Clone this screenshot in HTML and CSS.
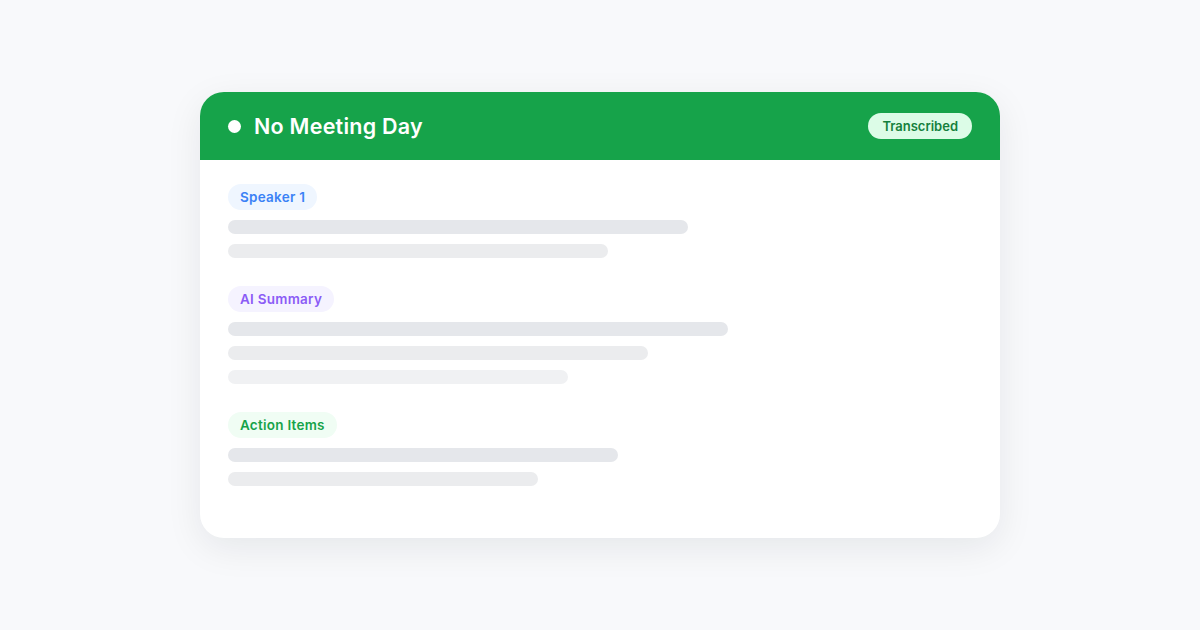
FILE: index.html
```html
<!DOCTYPE html>
<html lang="en">
<head>
    <meta charset="UTF-8">
    <meta name="viewport" content="width=device-width, initial-scale=1.0">
    <title>No Meeting Day</title>
    <link rel="stylesheet" href="styles.css">
</head>
<body>
    <div class="card">
        <div class="head">
            <div class="title"><span class="dot"></span>No Meeting Day</div>
            <span class="status">Transcribed</span>
        </div>
        <div class="body">
            <div class="section">
                <span class="tag blue">Speaker 1</span>
                <div class="lines">
                    <div class="line l1" style="width: 460px"></div>
                    <div class="line l2" style="width: 380px"></div>
                </div>
            </div>
            <div class="section">
                <span class="tag purple">AI Summary</span>
                <div class="lines">
                    <div class="line l1" style="width: 500px"></div>
                    <div class="line l2" style="width: 420px"></div>
                    <div class="line l3" style="width: 340px"></div>
                </div>
            </div>
            <div class="section">
                <span class="tag green">Action Items</span>
                <div class="lines">
                    <div class="line l1" style="width: 390px"></div>
                    <div class="line l2" style="width: 310px"></div>
                </div>
            </div>
        </div>
    </div>
</body>
</html>
```

FILE: styles.css
```css
*{
    margin: 0;
    padding: 0;
    box-sizing: border-box;
}
body{
    display: flex;
    justify-content: center;
    padding-top: 92px;
    height: 100vh;
    background-color: #f8f9fb;
    font-family: Inter, Roboto, "Noto Sans", sans-serif;
}
.card{
    width: 800px;
    height: 446px;
    background-color: #fff;
    border-radius: 24px;
    overflow: hidden;
    box-shadow: 0 10px 36px rgba(15, 23, 42, 0.08);
}
.head{
    height: 68px;
    display: flex;
    align-items: center;
    justify-content: space-between;
    padding: 0 28px;
    background-color: #16a34a;
}
.title{
    display: flex;
    align-items: center;
    gap: 13px;
    color: #fff;
    font-size: 21.5px;
    font-weight: 600;
    letter-spacing: 0.25px;
}
.dot{
    width: 13px;
    height: 13px;
    border-radius: 50%;
    background-color: #fff;
}
.status{
    height: 26px;
    line-height: 26px;
    padding: 0 14px;
    border-radius: 13px;
    background-color: #dcfce7;
    color: #15803d;
    font-size: 13px;
    font-weight: 600;
}
.body{
    display: flex;
    flex-direction: column;
    gap: 28px;
    padding: 24px 28px;
}
.section{
    display: flex;
    flex-direction: column;
    align-items: flex-start;
    gap: 10px;
}
.tag{
    height: 26px;
    line-height: 26px;
    padding: 0 12px;
    border-radius: 13px;
    font-size: 13.5px;
    font-weight: 600;
    letter-spacing: 0.25px;
}
.tag.blue{
    background-color: #eff6ff;
    color: #3b82f6;
}
.tag.purple{
    background-color: #f5f3ff;
    color: #8b5cf6;
}
.tag.green{
    background-color: #f0fdf4;
    color: #16a34a;
}
.lines{
    display: flex;
    flex-direction: column;
    gap: 10px;
}
.line{
    height: 14px;
    border-radius: 7px;
}
.l1{
    background-color: #e5e7eb;
}
.l2{
    background-color: #ebecee;
}
.l3{
    background-color: #f0f1f3;
}
```
